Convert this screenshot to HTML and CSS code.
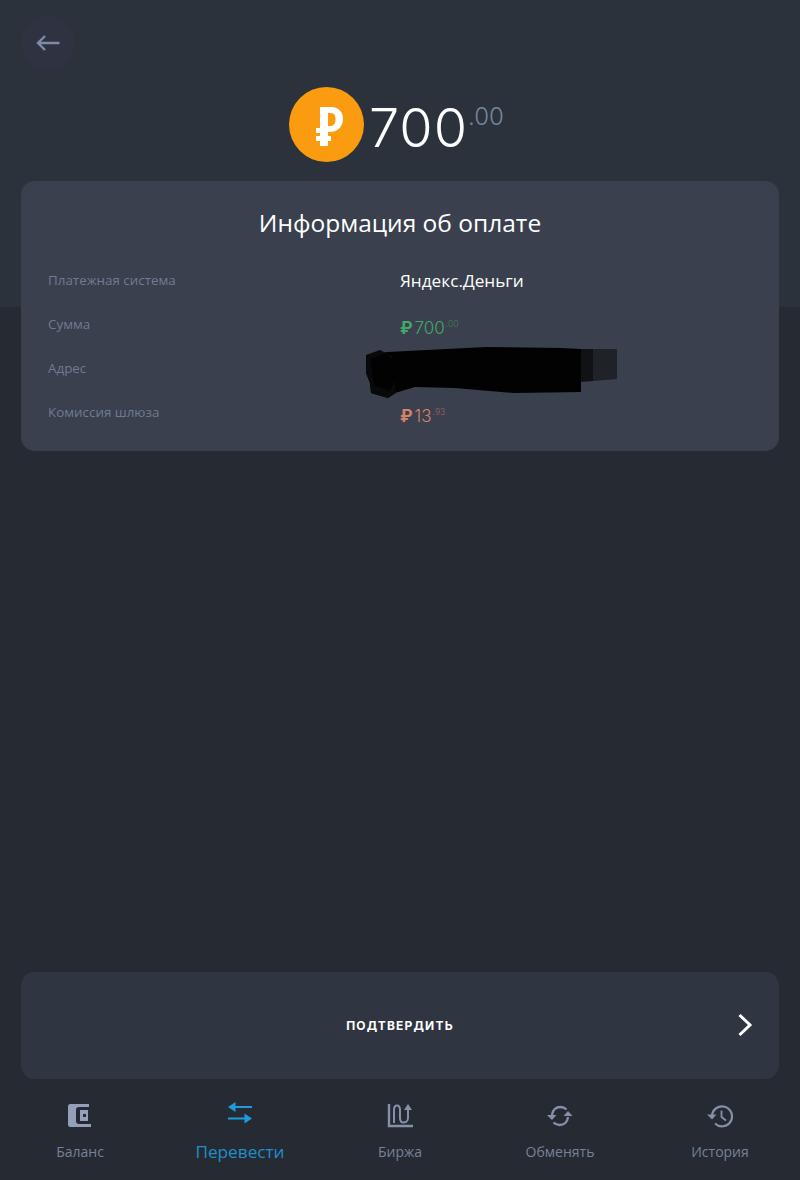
FILE: index.html
```html
<!DOCTYPE html>
<html lang="ru">
<head>
    <meta charset="UTF-8">
    <meta name="viewport" content="width=device-width, initial-scale=1.0">
    <title>Перевести</title>
    <link rel="stylesheet" href="styles.css">
</head>
<body>
    <div class="app">
        <div class="top">
            <button class="back">
                <svg width="26" height="18" viewBox="0 0 26 18"><path d="M24.500 9H3M10 2 3 9l7 7" fill="none" stroke="#7f8ba6" stroke-width="2.400"/></svg>
            </button>
            <div class="total">
                <div class="coin">
                    <svg class="coin-glyph" width="27" height="39" viewBox="0 0 27 39"><path fill-rule="evenodd" d="M4 0H15C23 0 27 5 27 12C27 19 22 25 14 25H12V29H15V34H12V39H4V34H0V29H4V26H0V21H4ZM12 6V19H15C18 19 19.500 16 19.500 12C19.500 8 18 6 15 6Z" fill="#fff"/></svg>
                </div>
                <div class="total-num">700</div>
                <div class="total-dec">.00</div>
            </div>
        </div>

        <div class="card">
            <h1 class="card-title">Информация об оплате</h1>
            <div class="rows">
                <div class="row">
                    <div class="label">Платежная система</div>
                    <div class="value">Яндекс.Деньги</div>
                </div>
                <div class="row">
                    <div class="label">Сумма</div>
                    <div class="value money green"><span class="rub">₽</span>700<sup>.00</sup></div>
                </div>
                <div class="row">
                    <div class="label">Адрес</div>
                    <div class="value redacted">
                        <svg class="scribble" width="252" height="52" viewBox="0 0 252 52">
                            <path d="M215 2h36v30l-36 3z" fill="#1f2229"/>
                            <path d="M200 2h27v32l-27 1z" fill="#101216"/>
                            <path d="M0 8 22 5 120 0 195 1 215 2V45L148 46 89 41 49 40 29 46 22 51 5 46 4 36 0 26z" fill="#020203"/>
                            <path d="M0 8 14 3 26 9 30 46 22 51 5 46 4 36 0 26z" fill="#08090b"/>
                            <path d="M4 12 20 6 34 20 24 44 8 38z" fill="#020203"/>
                        </svg>
                    </div>
                </div>
                <div class="row">
                    <div class="label">Комиссия шлюза</div>
                    <div class="value money red"><span class="rub">₽</span>13<sup>.93</sup></div>
                </div>
            </div>
        </div>

        <div class="spacer"></div>

        <div class="confirm">
            <span class="confirm-text">ПОДТВЕРДИТЬ</span>
            <svg class="confirm-arrow" width="16" height="24" viewBox="0 0 16 24"><path d="M2.500 2 13 12 2.500 22" fill="none" stroke="#fff" stroke-width="3"/></svg>
        </div>

        <div class="tabs">
            <div class="tab">
                <svg width="26" height="24" viewBox="0 0 26 24"><path fill-rule="evenodd" d="M3 0H22V3H12A3 3 0 0 0 9 6V17A3 3 0 0 0 12 20H24V23H3A2.500 2.500 0 0 1 1 20.500V2.500A2.500 2.500 0 0 1 3 0Z" fill="#94a0b8"/><path fill-rule="evenodd" d="M13 6H21V17H13ZM16 10V13H19V10Z" fill="#94a0b8"/></svg>
                <span>Баланс</span>
            </div>
            <div class="tab active">
                <svg class="tab-up" width="26" height="24" viewBox="0 0 26 24"><path d="M8 5H25M1 16.500H18" fill="none" stroke="#1e9bdc" stroke-width="2.200"/><path d="M1 5 8.500 0V10ZM25 16.500 17.500 11.500V21.500Z" fill="#1e9bdc"/></svg>
                <span>Перевести</span>
            </div>
            <div class="tab">
                <svg width="26" height="24" viewBox="0 0 26 24"><path d="M2 0V22H26" fill="none" stroke="#8591aa" stroke-width="2.400"/><path d="M7 19V6C7 3 8 1.500 10 1.500S13 3 13 6V14C13 17 14.500 18.500 16.500 18.500S21 17 21 14V3" fill="none" stroke="#8591aa" stroke-width="2"/><path d="M21 0 25 6H17Z" fill="#8591aa"/></svg>
                <span>Биржа</span>
            </div>
            <div class="tab">
                <svg width="26" height="24" viewBox="0 0 26 24"><path d="M5 11c.500-5 4-8 8.500-8 2.500 0 4.500 1 6 2.500M21 13c-.500 5-4 8-8.500 8-2.500 0-4.500-1-6-2.500" fill="none" stroke="#8591aa" stroke-width="2.400"/><path d="M0 11h9.500L5 16zM16.500 12h9L21 7z" fill="#8591aa"/></svg>
                <span>Обменять</span>
            </div>
            <div class="tab">
                <svg width="26" height="24" viewBox="0 0 26 24"><path d="M5 12a10 10 0 1 1 3 7.500" fill="none" stroke="#8591aa" stroke-width="2.200"/><path d="M0 10.500h9.500L5 15.500z" fill="#8591aa"/><path d="M14.500 6.500V13l4.500 3.500" fill="none" stroke="#8591aa" stroke-width="1.800"/></svg>
                <span>История</span>
            </div>
        </div>
    </div>
</body>
</html>
```

FILE: styles.css
```css
* {
    box-sizing: border-box;
}

body {
    margin: 0;
    background: #262a33;
    font-family: "Open Sans", "Noto Sans", sans-serif;
}

.app {
    width: 800px;
    height: 1180px;
    display: flex;
    flex-direction: column;
    overflow: hidden;
}

.top {
    height: 307px;
    background: #2b323b;
    padding: 16px 21px 0;
}

.back {
    display: flex;
    align-items: center;
    justify-content: center;
    width: 54px;
    height: 54px;
    padding: 0;
    border: none;
    border-radius: 50%;
    background: #2f3341;
}

.total {
    display: flex;
    align-items: flex-start;
    margin-top: 17px;
    margin-left: 268px;
}

.coin {
    display: flex;
    align-items: center;
    justify-content: center;
    width: 75px;
    height: 75px;
    border-radius: 50%;
    background: #fb9b0f;
}

.coin-glyph {
    margin: 4px 0 0 6px;
}

.total-num {
    margin-left: 5px;
    padding-top: 3px;
    font-family: Inter, sans-serif;
    font-size: 54px;
    font-weight: 300;
    line-height: 75px;
    letter-spacing: 1px;
    color: #fff;
}

.total-dec {
    padding-top: 1px;
    font-family: Inter, sans-serif;
    font-size: 24px;
    font-weight: 300;
    line-height: 58px;
    color: #76849e;
}

.card {
    width: 758px;
    height: 270px;
    margin: -126px 21px 0;
    padding: 25px 27px 0;
    border-radius: 14px;
    background: #3a404d;
}

.card-title {
    margin: 0;
    font-size: 24.500px;
    font-weight: 400;
    line-height: 34px;
    text-align: center;
    color: #fff;
}

.rows {
    margin-top: 18px;
}

.row {
    display: flex;
    align-items: center;
    height: 44px;
}

.label {
    width: 352px;
    font-size: 13.400px;
    color: #707b93;
}

.value {
    padding-top: 1px;
    font-size: 17.200px;
    font-weight: 500;
    color: #fff;
}

.redacted {
    position: relative;
}

.scribble {
    position: absolute;
    top: -21px;
    left: -34px;
    display: block;
}

.money {
    display: flex;
    align-items: flex-start;
    font-family: Inter, sans-serif;
    font-size: 17px;
    font-weight: 300;
    line-height: 22px;
    margin-top: 6px;
}

.money sup {
    font-size: 8.500px;
    line-height: 14px;
    margin-left: 1px;
    opacity: .6;
}

.rub {
    font-weight: 700;
    margin-right: 2px;
}

.green {
    color: #43a867;
}

.red {
    color: #d4826c;
}

.spacer {
    flex: 1;
}

.confirm {
    position: relative;
    display: flex;
    align-items: center;
    justify-content: center;
    width: 758px;
    height: 107px;
    margin: 0 21px;
    border-radius: 14px;
    background: #303542;
}

.confirm-text {
    font-family: Inter, sans-serif;
    font-size: 12px;
    font-weight: 700;
    letter-spacing: 1.200px;
    color: #fff;
}

.confirm-arrow {
    position: absolute;
    right: 26px;
    top: 41px;
}

.tabs {
    display: grid;
    grid-template-columns: repeat(5, 160px);
    height: 101px;
    padding-top: 25px;
}

.tab {
    display: flex;
    flex-direction: column;
    align-items: center;
    font-size: 14px;
    color: #76829a;
}

.tab span {
    margin-top: 14px;
}

.tab.active {
    font-size: 17.200px;
    color: #1e8fcb;
}

.tab.active span {
    margin-top: 14px;
}

.tab-up {
    margin-top: -2px;
}
```
